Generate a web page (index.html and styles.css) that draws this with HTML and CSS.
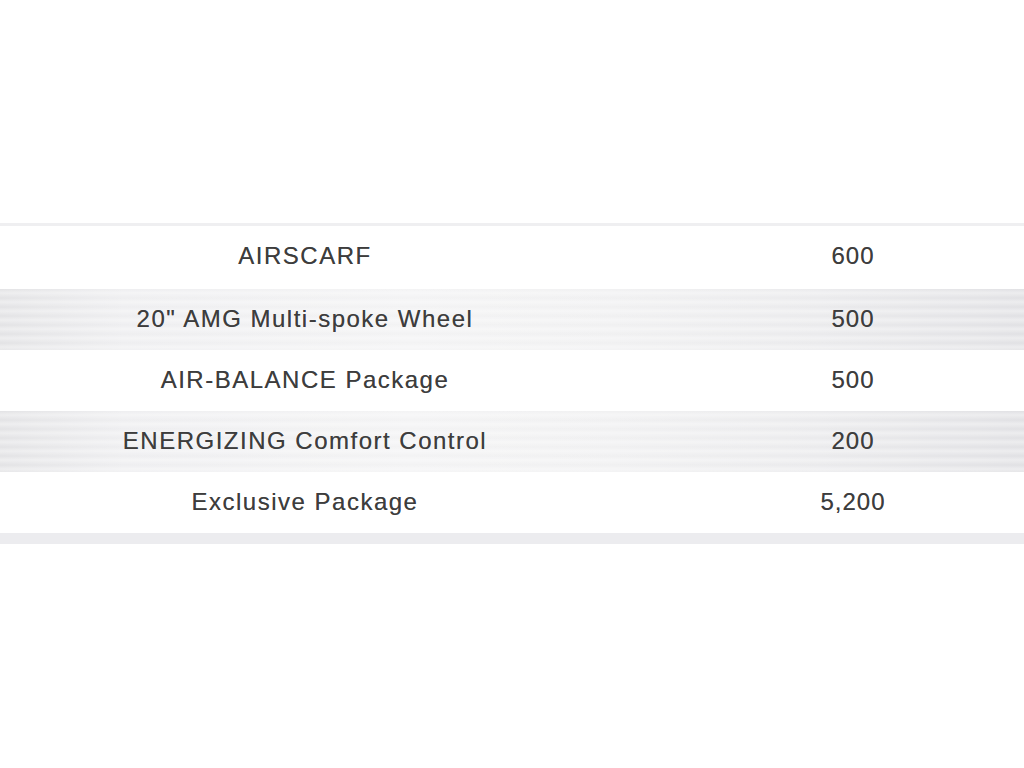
FILE: index.html
```html
<!DOCTYPE html>
<html>
<head>
<meta charset="utf-8">
<link rel="stylesheet" href="styles.css">
</head>
<body>
<div class="page">
  <div class="table">
    <div class="row first">
      <div class="cell name">AIRSCARF</div>
      <div class="cell price">600</div>
    </div>
    <div class="row alt">
      <div class="cell name">20" AMG Multi-spoke Wheel</div>
      <div class="cell price">500</div>
    </div>
    <div class="row">
      <div class="cell name">AIR-BALANCE Package</div>
      <div class="cell price">500</div>
    </div>
    <div class="row alt">
      <div class="cell name">ENERGIZING Comfort Control</div>
      <div class="cell price">200</div>
    </div>
    <div class="row">
      <div class="cell name">Exclusive Package</div>
      <div class="cell price">5,200</div>
    </div>
  </div>
</div>
</body>
</html>
```

FILE: styles.css
```css
html, body {
  margin: 0;
  padding: 0;
  background: #ffffff;
}
.page {
  width: 1024px;
  height: 768px;
  padding-top: 223px;
  box-sizing: border-box;
  font-family: "Liberation Sans", Arial, sans-serif;
  color: #3d3d3d;
}
.table {
  border-top: 3px solid #efeff1;
  border-bottom: 11px solid #ececef;
}
.row {
  display: grid;
  grid-template-columns: 608px 1fr;
  height: 61px;
  align-items: center;
  background: #ffffff;
}
.row.first {
  height: 63px;
}
.row.first .cell {
  padding-bottom: 4px;
}
.row.alt {
  background:
    repeating-linear-gradient(180deg, rgba(255,255,255,0) 0px, rgba(255,255,255,0.4) 4px, rgba(255,255,255,0) 9px),
    linear-gradient(90deg, #e3e3e5 0%, #eeeef0 12%, #f3f3f4 40%, #f0f0f1 60%, #eaeaec 80%, #e1e1e4 100%);
}
.cell {
  font-size: 24px;
  letter-spacing: 1.5px;
  text-align: center;
  white-space: nowrap;
  padding-left: 2px;
  padding-bottom: 2px;
  text-shadow: 0 0 0.6px rgba(60,60,60,0.6);
}
.price {
  padding-left: 74px;
  letter-spacing: 1px;
}
```
